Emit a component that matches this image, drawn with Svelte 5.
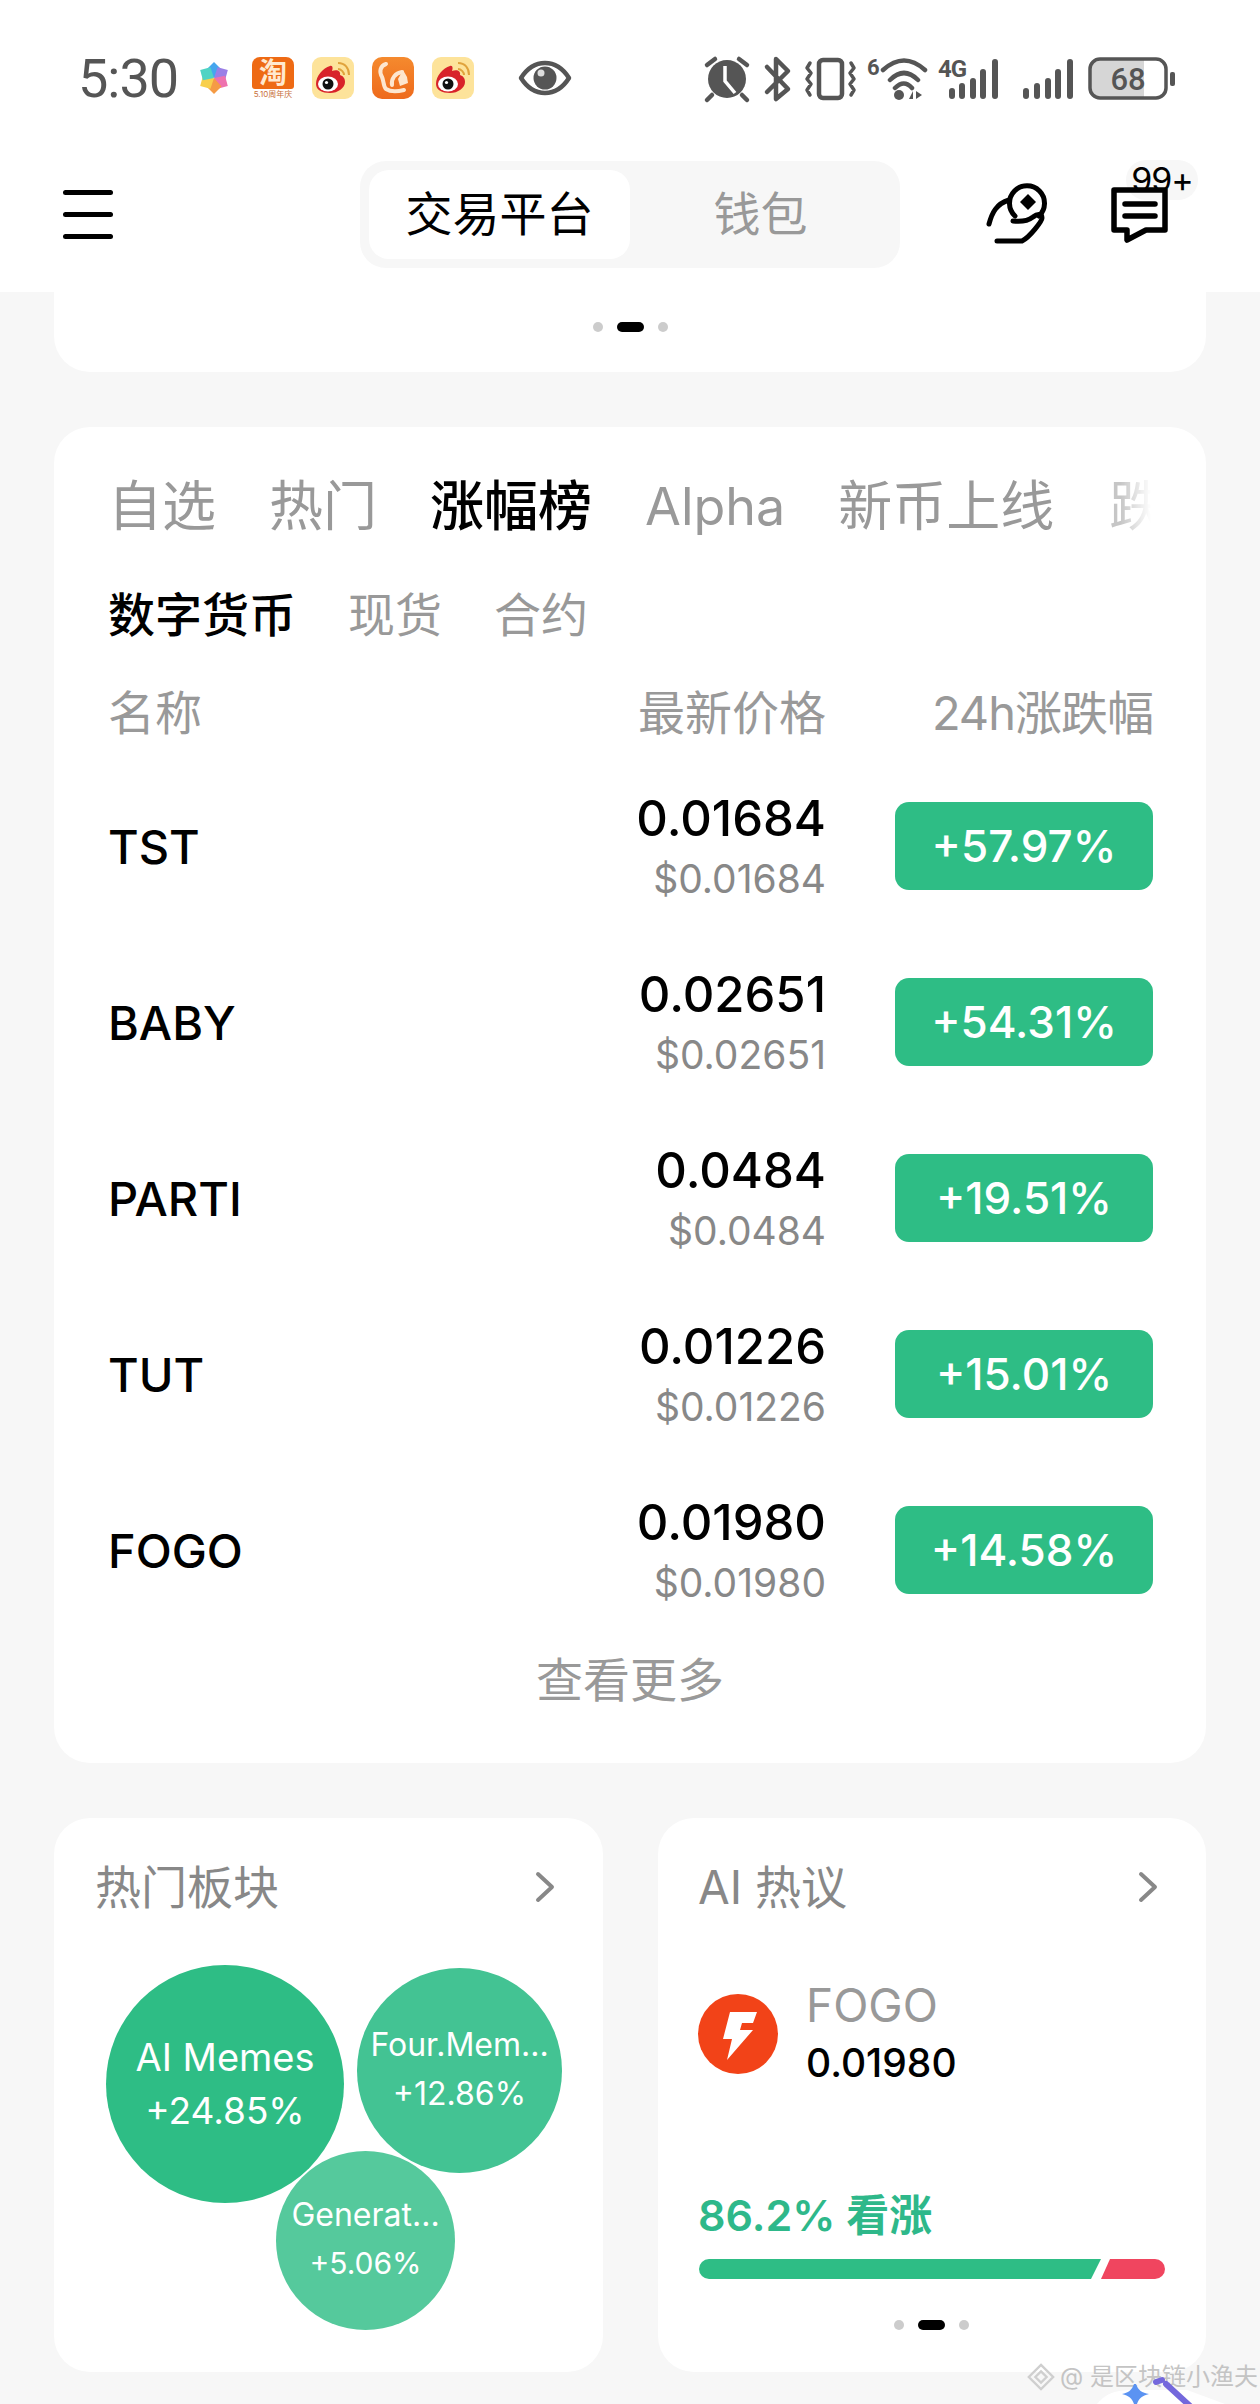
<script lang="ts">
  const tabs = ['自选', '热门', '涨幅榜', 'Alpha', '新币上线', '跌幅榜'];
  const subTabs = ['数字货币', '现货', '合约'];
  const coins = [
    { name: 'TST', price: '0.01684', change: '+57.97%' },
    { name: 'BABY', price: '0.02651', change: '+54.31%' },
    { name: 'PARTI', price: '0.0484', change: '+19.51%' },
    { name: 'TUT', price: '0.01226', change: '+15.01%' },
    { name: 'FOGO', price: '0.01980', change: '+14.58%' }
  ];
  const bubbles = [
    { cls: 'big', name: 'AI Memes', change: '+24.85%' },
    { cls: 'mid', name: 'Four.Mem...', change: '+12.86%' },
    { cls: 'small', name: 'Generat...', change: '+5.06%' }
  ];
  const petals = [
    { a: 0, c: '#45a6ee' },
    { a: 60, c: '#9a7fe6' },
    { a: 120, c: '#ee72ae' },
    { a: 180, c: '#f59b45' },
    { a: 240, c: '#f8cf4c' },
    { a: 300, c: '#4fd3c4' }
  ];
  const sigBars = [
    { x: 0, t: 29 },
    { x: 11, t: 24 },
    { x: 22, t: 19 },
    { x: 32, t: 10 },
    { x: 44, t: 0 }
  ];

  const tabClass = (i: number) => (i === 2 ? 'on' : i === 3 ? 'latin' : i === 5 ? 'cut' : '');
</script>

{#snippet weibo()}
  <svg class="app" viewBox="0 0 42 42">
    <rect width="42" height="42" rx="9" fill="#fde39a" />
    <path d="M4 27c0-8 7-16 14-18 3-1 3 3 2 5 5-2 9 0 8 4 3 1 5 3 5 7 0 6-7 11-15 11S4 33 4 27z" fill="#d8232a" />
    <ellipse cx="16" cy="27" rx="10" ry="7.5" fill="#fff" />
    <circle cx="16" cy="27" r="5.5" fill="#111" />
    <circle cx="14.5" cy="25.5" r="1.6" fill="#fff" />
    <path d="M26 12c3 0 6 3 6 6M26 6c7 0 11 5 11 12" fill="none" stroke="#e0a33c" stroke-width="2" />
  </svg>
{/snippet}

{#snippet chevron()}
  <svg class="chev" viewBox="0 0 20 32">
    <path d="M3 3l14 13L3 29" fill="none" stroke="#888" stroke-width="4" stroke-linecap="round" stroke-linejoin="round" />
  </svg>
{/snippet}

<main>
  <header>
    <div class="status">
      <span class="time">5:30</span>
      <svg class="star" viewBox="-16 -18 32 36">
        {#each petals as p}
          <path d="M0 0L-8 -9L0 -17L8 -9Z" fill={p.c} transform="rotate({p.a})" />
        {/each}
      </svg>
      <div class="taobao">
        <div class="tb-face">淘</div>
        <div class="tb-sub">5.10周年庆</div>
      </div>
      {@render weibo()}
      <svg class="app" viewBox="0 0 42 42">
        <defs>
          <linearGradient id="ucg" x1="0" y1="0" x2="0" y2="1">
            <stop offset="0" stop-color="#f58a2e" />
            <stop offset="1" stop-color="#ee6a1c" />
          </linearGradient>
        </defs>
        <rect width="42" height="42" rx="10" fill="url(#ucg)" />
        <path d="M14 7c-6 2-7 8-4 13 2 4 1 9 4 12 3 2 10 3 18 1M30 15c-7 1-11 7-10 13" fill="none" stroke="#fde6cf" stroke-width="4" stroke-linecap="round" />
        <path d="M26 22l5-9 4 7 1 6-8 3z" fill="#fde6cf" />
      </svg>
      {@render weibo()}
      <svg class="eye" viewBox="0 0 54 36">
        <path d="M3 18C10 7 18 3 27 3s17 4 24 15c-7 11-15 15-24 15S10 29 3 18z" fill="none" stroke="#555" stroke-width="4.5" stroke-linejoin="round" />
        <circle cx="27" cy="18" r="11.5" fill="#555" />
        <circle cx="23" cy="13" r="3.5" fill="#ddd" />
      </svg>

      <svg class="sys" viewBox="700 50 480 54">
        <g fill="none" stroke="#555" stroke-width="4.5" stroke-linecap="round" stroke-linejoin="round">
          <path d="M707 64l8-6M739 58l8 6M712 94l-5 5M742 94l5 5" />
          <path d="M767 66l21 22-12 10V58l12 12-21 21" />
          <rect x="819" y="59" width="23" height="38" rx="4" />
          <path d="M810 62l-3 5 4 5-4 6 4 5-4 6 3 5M851 62l3 5-4 5 4 6-4 5 4 6-3 5" stroke-width="3.5" />
          <path d="M883 69Q904 50 925 69M890 79Q904 65 918 79M895 87Q904 78 912 87" stroke-width="4.5" />
        </g>
        <circle cx="727" cy="78" r="19" fill="#555" />
        <path d="M725 65v15l10 12" fill="none" stroke="#fff" stroke-width="3.5" />
        <circle cx="899" cy="94" r="5" fill="#555" />
        <path d="M909 98l4-8v8zM916 90v8l6-4z" fill="#555" />
        <text x="867" y="74" class="sys-small">6</text>
        <text x="938" y="76" class="sys-mid">4G</text>
        <g stroke="#555" stroke-width="6" stroke-linecap="round">
          <path d="M952 90v5M962 85v10M973 80v15M983 71v24M995 61v34" />
          {#each sigBars as b}
            <line x1={1026 + b.x} y1={61 + b.t} x2={1026 + b.x} y2="95" />
          {/each}
        </g>
        <path d="M1098 58h46v39h-46a8 8 0 0 1-8-8V66a8 8 0 0 1 8-8z" fill="#d6d6d6" />
        <rect x="1090" y="58" width="76" height="39" rx="10" fill="none" stroke="#555" stroke-width="3.5" />
        <rect x="1170" y="71" width="5" height="14" rx="2" fill="#555" />
        <text x="1128" y="89" text-anchor="middle" class="sys-batt">68</text>
      </svg>
    </div>

    <nav>
      <div class="burger"><span></span><span></span><span></span></div>
      <div class="switch">
        <div class="seg on">交易平台</div>
        <div class="seg">钱包</div>
      </div>
      <svg class="hand" viewBox="985 175 65 72">
        <g fill="none" stroke="#000" stroke-width="5" stroke-linecap="round" stroke-linejoin="round">
          <path d="M989 224c3-11 7-20 20-24" />
          <path d="M1013 221c8 1 16-1 20-4 5-4 9-3 9 1 0 3-12 19-20 23h-25" />
          <path d="M1015 216a17.500 17.500 0 1 1 24 0" />
        </g>
        <path d="M1028 194l8 8-8 8-8-8z" fill="#000" />
      </svg>
      <div class="msg">
        <div class="badge">99+</div>
        <svg viewBox="1105 180 70 70">
          <path d="M1114 190h51v40h-19l-19 10v-10h-13z" fill="none" stroke="#000" stroke-width="5.500" stroke-linejoin="round" />
          <path d="M1125 204h30M1125 216h30" stroke="#000" stroke-width="5.500" stroke-linecap="round" />
        </svg>
      </div>
    </nav>
  </header>

  <section class="banner-end">
    <div class="dots"><i></i><b></b><i></i></div>
  </section>

  <section class="market">
    <div class="tabs">
      {#each tabs as tab, i}
        <span class={tabClass(i)}>{tab}</span>
      {/each}
    </div>
    <div class="subtabs">
      {#each subTabs as tab, i}
        <span class={i === 0 ? 'on' : ''}>{tab}</span>
      {/each}
    </div>
    <div class="row head">
      <span>名称</span>
      <span class="right">最新价格</span>
      <span class="right tight">24h涨跌幅</span>
    </div>
    {#each coins as coin}
      <div class="row coin">
        <span class="name">{coin.name}</span>
        <div class="right quote">
          <div class="price">{coin.price}</div>
          <div class="usd">${coin.price}</div>
        </div>
        <div class="change">{coin.change}</div>
      </div>
    {/each}
    <div class="more">查看更多</div>
  </section>

  <div class="duo">
    <section class="mini">
      <div class="mini-title"><span>热门板块</span>{@render chevron()}</div>
      {#each bubbles as b}
        <div class="bubble {b.cls}">
          <span>{b.name}</span>
          <span class="pct">{b.change}</span>
        </div>
      {/each}
    </section>

    <section class="mini ai">
      <div class="mini-title"><span>AI 热议</span>{@render chevron()}</div>
      <div class="token">
        <svg class="logo" viewBox="0 0 80 80">
          <circle cx="40" cy="40" r="40" fill="#f24318" />
          <path d="M32 18h27l-4 11H44l-2 7h13L29 66l5-21h-9z" fill="#fff" />
        </svg>
        <div>
          <div class="tk-name">FOGO</div>
          <div class="tk-price">0.01980</div>
        </div>
      </div>
      <div class="bull">86.2% 看涨</div>
      <div class="bar"><div class="up"></div><div class="down"></div></div>
      <div class="dots small"><i></i><b></b><i></i></div>
    </section>
  </div>

  <div class="mark">
    <svg class="mark-logo" viewBox="0 0 32 32">
      <path d="M16 3l13 13-13 13L3 16z M16 10l6 6-6 6-6-6z" fill="none" stroke="#cfcfcf" stroke-width="2.5" />
    </svg>
    <span>@ 是区块链小渔夫</span>
  </div>
  <svg class="wand" viewBox="1090 2376 140 28">
    <path d="M1097 2404c10-12 20-14 40-14l50 0 38 14z" fill="#fff" />
    <path d="M1136 2384c2 6 6 9 13 10-7 2-10 4-12 10h-3c-2-6-5-8-12-10 6-1 10-4 12-10z" fill="#5b93f2" />
    <path d="M1156 2382l6-2M1166 2384l24 22" stroke="#7468dc" stroke-width="6" stroke-linecap="round" />
  </svg>
</main>

<style>
  :global(body) {
    margin: 0;
    background: #f7f7f7;
  }

  main {
    position: relative;
    width: 1260px;
    height: 2404px;
    overflow: hidden;
    background: #f7f7f7;
    color: #000;
    font-family: Inter, "Noto Sans CJK SC", sans-serif;
  }

  header {
    height: 292px;
    padding-top: 56px;
    box-sizing: border-box;
    background: #fff;
  }

  .status {
    display: flex;
    align-items: center;
    height: 44px;
    padding-left: 78px;
  }

  .time {
    width: 102px;
    margin-right: 19px;
    font-family: Roboto, sans-serif;
    font-size: 54px;
    letter-spacing: -1px;
    color: #555;
  }

  .star {
    width: 30px;
    height: 34px;
    margin-right: 23px;
  }

  .app {
    width: 42px;
    height: 42px;
    margin-right: 18px;
  }

  .taobao {
    display: flex;
    flex-direction: column;
    align-items: center;
    width: 42px;
    margin-right: 18px;
  }

  .tb-face {
    width: 42px;
    height: 32px;
    border-radius: 8px 8px 3px 3px;
    background: #ee6a14;
    color: #ffe9cf;
    font-size: 28px;
    line-height: 32px;
    text-align: center;
    font-weight: 700;
  }

  .tb-sub {
    font-size: 8px;
    line-height: 10px;
    color: #c8703a;
    white-space: nowrap;
  }

  .eye {
    width: 54px;
    height: 36px;
    margin-left: 26px;
  }

  .sys {
    width: 480px;
    height: 54px;
    margin-left: 128px;
  }

  .sys-small,
  .sys-mid,
  .sys-batt {
    font-family: Roboto, sans-serif;
    font-weight: 700;
    fill: #555;
  }

  .sys-small {
    font-size: 22px;
  }

  .sys-mid {
    font-size: 24px;
    letter-spacing: -1px;
  }

  .sys-batt {
    font-size: 31px;
    font-weight: 500;
  }

  nav {
    display: flex;
    align-items: center;
    height: 107px;
    margin-top: 61px;
    padding-left: 63px;
  }

  .burger {
    display: flex;
    flex-direction: column;
    gap: 17px;
    width: 50px;
  }

  .burger span {
    height: 5px;
    border-radius: 3px;
    background: #000;
  }

  .switch {
    display: flex;
    box-sizing: border-box;
    width: 540px;
    height: 107px;
    margin-left: 247px;
    padding: 9px;
    border-radius: 26px;
    background: #f7f7f7;
  }

  .seg {
    flex: 1;
    border-radius: 20px;
    color: #999;
    font-size: 47px;
    line-height: 87px;
    text-align: center;
  }

  .seg.on {
    background: #fff;
    color: #000;
  }

  .hand {
    width: 65px;
    height: 72px;
    margin-left: 85px;
    margin-bottom: 7px;
  }

  .msg {
    position: relative;
    width: 70px;
    height: 70px;
    margin-left: 55px;
  }

  .msg svg {
    position: relative;
    display: block;
    width: 70px;
    height: 70px;
  }

  .badge {
    position: absolute;
    left: 21px;
    top: -20px;
    width: 72px;
    height: 40px;
    border-radius: 20px;
    background: #f7f7f7;
    font-size: 34px;
    line-height: 40px;
    text-align: center;
    font-family: Inter, sans-serif;
    letter-spacing: -1px;
  }

  .banner-end {
    box-sizing: border-box;
    height: 80px;
    margin: 0 54px;
    padding-top: 30px;
    border-radius: 0 0 36px 36px;
    background: #fff;
  }

  .dots {
    display: flex;
    justify-content: center;
    align-items: center;
    gap: 14px;
  }

  .dots i {
    width: 10px;
    height: 10px;
    border-radius: 50%;
    background: #ccc;
  }

  .dots b {
    width: 27px;
    height: 10px;
    border-radius: 5px;
    background: #000;
  }

  .market {
    box-sizing: border-box;
    height: 1336px;
    margin: 55px 54px 0;
    padding-top: 50px;
    border-radius: 36px;
    background: #fff;
  }

  .tabs {
    display: flex;
    gap: 53px;
    height: 60px;
    margin-left: 54px;
    color: #999;
    font-size: 54px;
    line-height: 60px;
    white-space: nowrap;
  }

  .tabs .on {
    color: #000;
    font-weight: 500;
  }

  .tabs .latin {
    font-size: 52px;
  }

  .tabs .cut {
    width: 42px;
    margin-left: 2px;
    overflow: hidden;
    opacity: 0.55;
    -webkit-mask-image: linear-gradient(to left, transparent, #000 30px);
    mask-image: linear-gradient(to left, transparent, #000 30px);
  }

  .subtabs {
    display: flex;
    gap: 52px;
    margin: 48px 0 0 54px;
    color: #999;
    font-size: 47px;
    line-height: 60px;
  }

  .subtabs .on {
    color: #000;
    font-weight: 500;
  }

  .row {
    display: grid;
    grid-template-columns: 1fr auto 258px;
    column-gap: 69px;
    align-items: center;
    padding: 0 53px 0 54px;
  }

  .right {
    text-align: right;
  }

  .head {
    margin-top: 38px;
    margin-bottom: 15px;
    color: #999;
    font-size: 47px;
    line-height: 60px;
  }

  .tight {
    letter-spacing: -1px;
  }

  .coin {
    height: 176px;
  }

  .name {
    font-size: 47px;
    font-weight: 500;
  }

  .quote {
    margin-top: 6px;
  }

  .price {
    font-size: 49px;
    line-height: 60px;
    font-weight: 500;
  }

  .usd {
    color: #888;
    font-size: 39px;
    line-height: 60px;
  }

  .change {
    height: 88px;
    border-radius: 14px;
    background: #2ebd85;
    color: #fff;
    font-size: 44px;
    font-weight: 500;
    line-height: 88px;
    text-align: center;
  }

  .more {
    margin-top: 12px;
    color: #999;
    font-size: 47px;
    line-height: 60px;
    text-align: center;
  }

  .duo {
    display: flex;
    gap: 55px;
    margin: 55px 54px 0;
  }

  .mini {
    position: relative;
    box-sizing: border-box;
    flex: 1;
    height: 554px;
    padding: 39px 41px 0;
    border-radius: 36px;
    background: #fff;
  }

  .mini-title {
    display: flex;
    justify-content: space-between;
    align-items: center;
    color: #888;
    font-size: 46px;
    line-height: 60px;
  }

  .chev {
    width: 20px;
    height: 32px;
    margin-right: 7px;
  }

  .bubble {
    position: absolute;
    display: flex;
    flex-direction: column;
    justify-content: center;
    align-items: center;
    border-radius: 50%;
    color: #fff;
    white-space: nowrap;
  }

  .big {
    left: 52px;
    top: 147px;
    width: 238px;
    height: 238px;
    background: #2ebd85;
    font-size: 38px;
    line-height: 53px;
  }

  .big .pct {
    font-size: 37px;
  }

  .mid {
    left: 303px;
    top: 150px;
    width: 205px;
    height: 205px;
    background: #43c393;
    font-size: 32px;
    line-height: 49px;
  }

  .mid .pct {
    margin-bottom: 4px;
  }

  .small {
    left: 222px;
    top: 333px;
    width: 179px;
    height: 179px;
    background: #55c99c;
    font-size: 32px;
    line-height: 49px;
  }

  .small .pct {
    font-size: 30px;
    margin-bottom: 3px;
  }

  .token {
    display: flex;
    align-items: center;
    gap: 28px;
    margin-top: 60px;
  }

  .logo {
    display: block;
    width: 80px;
    height: 80px;
  }

  .tk-name {
    color: #999;
    font-size: 46px;
    line-height: 57px;
  }

  .tk-price {
    font-size: 39px;
    font-weight: 500;
    line-height: 57px;
  }

  .ai {
    padding-left: 40px;
  }

  .bull {
    margin-top: 94px;
    color: #2eb88a;
    font-size: 43px;
    font-weight: 600;
    line-height: 60px;
  }

  .bar {
    display: flex;
    height: 20px;
    margin-top: 14px;
    margin-left: 1px;
  }

  .up {
    width: 402px;
    border-radius: 10px 0 0 10px;
    background: #2ebd85;
    clip-path: polygon(0 0, 100% 0, calc(100% - 10px) 100%, 0 100%);
  }

  .down {
    flex: 1;
    border-radius: 0 10px 10px 0;
    background: #f0455f;
    clip-path: polygon(9px 0, 100% 0, 100% 100%, 0 100%);
  }

  .dots.small {
    position: static;
    width: auto;
    height: auto;
    margin-top: 41px;
    background: none;
  }

  .mark {
    position: absolute;
    left: 1026px;
    top: 2360px;
    display: flex;
    align-items: center;
    gap: 4px;
    color: #c4c4c4;
    font-size: 24px;
    line-height: 34px;
    white-space: nowrap;
  }

  .mark-logo {
    width: 30px;
    height: 30px;
  }

  .wand {
    position: absolute;
    left: 1090px;
    top: 2376px;
    width: 140px;
    height: 28px;
  }
</style>
